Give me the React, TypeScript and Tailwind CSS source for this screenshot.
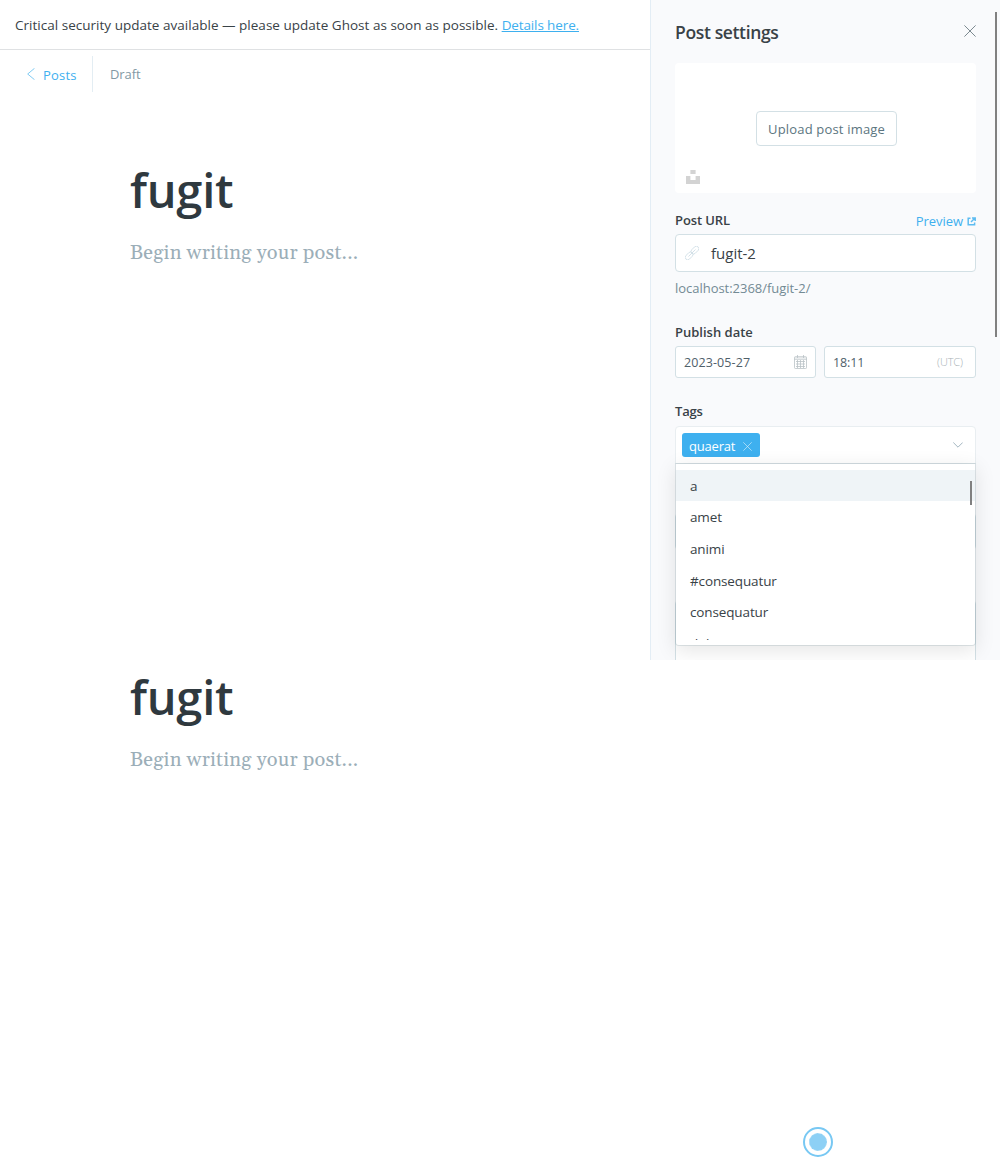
import React from "react";

const tags = ["a", "amet", "animi", "#consequatur", "consequatur", "dolor"];

function CloseIcon({ className }: { className: string }) {
  return (
    <svg className={className} viewBox="0 0 12 12" fill="none" stroke="currentColor" strokeWidth=".85">
      <path d="M.4.4l11.2 11.2M11.6.4L.4 11.6" />
    </svg>
  );
}

function UnsplashIcon() {
  return (
    <svg className="h-3.5 w-3.5" viewBox="0 0 14 14" fill="#d3d3d3">
      <path d="M4.4 0h5.2v4H4.4zM0 6h4.4v4h5.2V6H14v8H0z" />
    </svg>
  );
}

function LinkIcon() {
  return (
    <svg className="h-3.5 w-3.5 shrink-0" viewBox="0 0 14 14" fill="none" stroke="#cddde5" strokeWidth=".8">
      <g transform="rotate(-45 7 7)">
        <rect x="-1.6" y="4.5" width="9" height="5" rx="2.5" />
        <rect x="6.6" y="4.5" width="9" height="5" rx="2.5" />
        <path d="M2 7h10" />
      </g>
    </svg>
  );
}

function CalendarIcon() {
  return (
    <svg className="mb-0.5 h-3.5 w-[13px]" viewBox="0 0 13 14" fill="none" stroke="#bac3c7" strokeWidth=".8">
      <rect x=".5" y="1.7" width="12" height="11.8" rx=".8" />
      <path d="M.5 4.5h12M.5 3h12" strokeWidth=".6" />
      <path d="M3.5 0v3M9.5 0v3M2 6.5h9M2 9h9M2 11.5h9M3.5 5v8M6.5 5v8M9.5 5v8" />
    </svg>
  );
}

function ExternalIcon() {
  return (
    <svg className="mb-0.5 h-[9px] w-[9px]" viewBox="0 0 9 9" fill="none" stroke="#5dbcf1" strokeWidth="1.5">
      <path d="M3.5 1.2H1.2v6.6h6.4V5.6M5 .9h3.2V4M8 1L4 5" />
    </svg>
  );
}

function Editor() {
  return (
    <div className="pl-[130px]">
      <h1 className="h-[60px] text-[47px] font-semibold leading-[61px] tracking-[-0.25px] text-[#2f393f]">
        fugit
      </h1>
      <p className="mt-[17px] h-[32px] whitespace-nowrap font-['Georgia','Gelasio','Noto_Serif','Liberation_Serif',serif] text-[20px] leading-[32px] tracking-[0.21px] text-[#9baeb8]">
        Begin writing your post...
      </p>
    </div>
  );
}

function TagSelect() {
  return (
    <div className="relative">
      <div className="flex h-[38px] items-center rounded-t border border-[#e9eef1] bg-white pl-1.5 pr-[12px]">
        <span className="flex h-6 w-[78px] items-center justify-between rounded-[3px] bg-[#3eb0ef] pl-[7px] pr-2 text-[13px] tracking-[-0.2px] text-white">
          <span className="pt-[3px]">quaerat</span>
          <CloseIcon className="mt-[3px] h-[9px] w-[9px] opacity-80" />
        </span>
        <svg className="ml-auto h-[6px] w-[10px]" viewBox="0 0 10 6" fill="none" stroke="#a3b6c0">
          <path d="M.3.5L5 5.2 9.7.5" />
        </svg>
      </div>
      <div className="absolute inset-x-0 top-[37px] z-10 h-[183px] rounded-b border border-[#5f7d8c2e] bg-white bg-clip-padding pt-1.5 shadow-[0_5px_20px_rgba(0,0,0,0.1)]">
        <ul className="h-[170px] overflow-hidden">
          {tags.map((tag, i) => (
            <li
              key={tag}
              className={
                i === 0
                  ? "h-[31.4px] bg-[#eff4f7] pl-3.5 text-[13.5px] leading-[32px] text-[#394247]"
                  : "h-[31.6px] pl-3.5 text-[13.5px] leading-[32px] tracking-[-0.13px] text-[#394247]"
              }
            >
              {tag}
            </li>
          ))}
        </ul>
        <span className="absolute right-[3px] top-[17px] h-6 w-0.5 bg-[#808080]" />
      </div>
    </div>
  );
}

function Settings() {
  return (
    <aside className="relative h-[660px] w-[350px] shrink-0 overflow-hidden border-l border-[#e3edf5] bg-[#f9fafc] px-6">
      <span className="absolute right-[3px] top-3 h-[325px] w-0.5 bg-[#808080]" />
      <header className="flex h-[63px] items-center justify-between">
        <h2 className="pt-0.5 text-[17.5px] font-semibold tracking-[-0.36px] text-[#394247]">Post settings</h2>
        <CloseIcon className="mb-px h-[12px] w-[12px] text-[#66757c]" />
      </header>
      <div className="relative flex h-[130px] items-center justify-center rounded bg-white">
        <button className="ml-px h-[35px] w-[141px] rounded border border-[#d3e0e5] pl-[7px] pr-1.5 pt-[3px] text-[13px] tracking-[0.18px] text-[#5b7580]">
          Upload post image
        </button>
        <span className="absolute bottom-[9px] left-[11px]"><UnsplashIcon /></span>
      </div>
      <div className="mt-[19px] flex h-[18px] items-center justify-between">
        <span className="text-[13px] font-semibold tracking-[-0.1px] text-[#394247]">Post URL</span>
        <span className="flex items-center gap-1 pt-0.5 text-[13px] tracking-[-0.05px] text-[#3eb0ef]">
          Preview <ExternalIcon />
        </span>
      </div>
      <div className="mt-1 flex h-[38px] items-center rounded border border-[#d3e0e5] bg-white pl-[9px] text-[15px] text-[#394247]">
        <LinkIcon />
        <span className="ml-3">fugit-2</span>
      </div>
      <p className="mt-1.5 h-5 text-[13px] leading-5 tracking-[-0.03px] text-[#738a94]">localhost:2368/fugit-2/</p>
      <p className="mt-6 h-5 text-[13px] font-semibold leading-5 text-[#394247]">Publish date</p>
      <div className="mt-1 flex gap-2">
        <div className="flex h-8 w-[141px] items-center justify-between rounded-[3px] border border-[#d3e0e5] bg-white px-2 pt-0.5 text-[12.5px] tracking-[0.1px] text-[#50606a]">
          2023-05-27 <CalendarIcon />
        </div>
        <div className="flex h-8 flex-1 items-center justify-between rounded-[3px] border border-[#d3e0e5] bg-white pl-2 pr-3 pt-0.5 text-[12.5px] tracking-[-0.1px] text-[#50606a]">
          18:11 <span className="mb-px text-[11px] font-light text-[#a8b1b6]">(UTC)</span>
        </div>
      </div>
      <p className="mb-[5px] mt-[23px] h-5 text-[13px] font-semibold leading-5 tracking-[-0.2px] text-[#394247]">Tags</p>
      <TagSelect />
      <div className="mt-[49px] h-[37px] rounded border border-[#d3e0e5] bg-white" />
      <div className="mt-[50px] h-[100px] rounded-t border border-[#d3e0e5] bg-white" />
    </aside>
  );
}

export default function App() {
  return (
    <div className="h-[1167px] w-[1000px] overflow-hidden bg-white font-['Segoe_UI','Selawik','Open_Sans','Noto_Sans',sans-serif]">
      <div className="flex h-[660px]">
        <main className="w-[650px]">
          <div className="flex h-[50px] items-center whitespace-pre border-b border-[#dfe1e3] pl-[15px] pt-0.5 text-[13.5px] text-[#394247]">
            <span className="tracking-[0.02px]">Critical security update available — please update Ghost as soon as possible. </span>
            <a className="tracking-[-0.12px] text-[#3eb0ef] underline">Details here.</a>
          </div>
          <nav className="flex h-[50px] items-center text-[13px]">
            <svg className="mb-0.5 ml-[27px] h-3 w-2" viewBox="0 0 8 12" fill="none" stroke="#72c5f2" strokeWidth=".9">
              <path d="M7.5.3L.7 6l6.8 5.7" />
            </svg>
            <span className="ml-2 w-[49px] pt-0.5 tracking-[0.2px] text-[#3eb0ef]">Posts</span>
            <span className="mt-[-2px] h-9 w-px bg-[#e3edf3]" />
            <span className="ml-[17px] tracking-[-0.1px] text-[#8399a4]">Draft</span>
          </nav>
          <div className="pt-[60px]"><Editor /></div>
        </main>
        <Settings />
      </div>
      <div className="flex h-[507px] flex-col justify-between pt-[7px]">
        <Editor />
        <span className="mb-2.5 ml-[803px] flex h-[30px] w-[30px] items-center justify-center rounded-full border-2 border-[#78c8f3]">
          <span className="h-[18px] w-[18px] rounded-full border border-dashed border-[#a4dbf8] bg-[#8dd0f5]" />
        </span>
      </div>
    </div>
  );
}
